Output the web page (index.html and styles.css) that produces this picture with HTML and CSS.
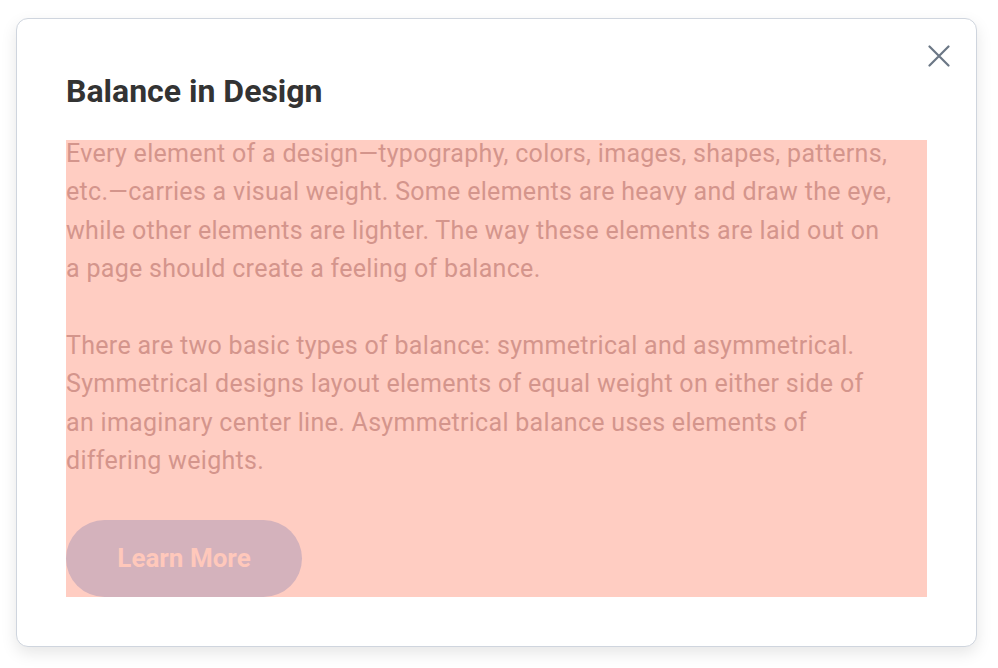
FILE: index.html
```html
<!DOCTYPE html>
<html>
<head>
<meta charset="utf-8">
<link rel="stylesheet" href="styles.css">
</head>
<body>
<div class="card">
  <button class="close" aria-label="Close">
    <svg width="22" height="22" viewBox="0 0 22 22"><path d="M1.5 1.5L20.5 20.5M20.5 1.5L1.5 20.5" stroke="#6b7785" stroke-width="2.2" stroke-linecap="round" fill="none"/></svg>
  </button>
  <h2 class="title">Balance in Design</h2>
  <div class="content">
    <p>Every element of a design—typography, colors, images, shapes, patterns, etc.—carries a visual weight. Some elements are heavy and draw the eye, while other elements are lighter. The way these elements are laid out on a page should create a feeling of balance.</p>
    <p>There are two basic types of balance: symmetrical and asymmetrical. Symmetrical designs layout elements of equal weight on either side of an imaginary center line. Asymmetrical balance uses elements of differing weights.</p>
    <a class="btn">Learn More</a>
  </div>
</div>
</body>
</html>
```

FILE: styles.css
```css
html, body {
  margin: 0;
  padding: 0;
  background: #ffffff;
}
body {
  padding: 18px 21px 21px 16px;
  font-family: Roboto, "Noto Sans", sans-serif;
}
.card {
  position: relative;
  box-sizing: border-box;
  width: 961px;
  height: 629px;
  border: 1px solid #cfd5de;
  border-radius: 12px;
  background: #fff;
  box-shadow: 0 6px 16px rgba(0,0,0,0.10);
  padding: 53px 49px 49px 49px;
}
.close {
  position: absolute;
  top: 26px;
  right: 26px;
  width: 22px;
  height: 22px;
  padding: 0;
  border: 0;
  background: none;
}
.close svg { display: block; }
.title {
  margin: 0 0 30px 0;
  font-size: 32px;
  line-height: 38px;
  font-weight: 700;
  color: #333333;
}
.content {
  display: flow-root;
  background: #ffcdc2;
  color: #d4958c;
  font-size: 25px;
  line-height: 38.4px;
  letter-spacing: 0.3px;
}
.content p {
  margin: 0 0 38.4px 0;
  padding-right: 31px;
}
.content p:first-child {
  margin-top: -5px;
}
.content p:last-of-type {
  margin-bottom: 39.4px;
}
.btn {
  display: inline-flex;
  align-items: center;
  justify-content: center;
  width: 236px;
  height: 77px;
  border-radius: 39px;
  background: #d4b2bc;
  color: #ffc8bb;
  font-weight: 700;
  font-size: 26px;
  letter-spacing: 0;
  vertical-align: top;
}
```
